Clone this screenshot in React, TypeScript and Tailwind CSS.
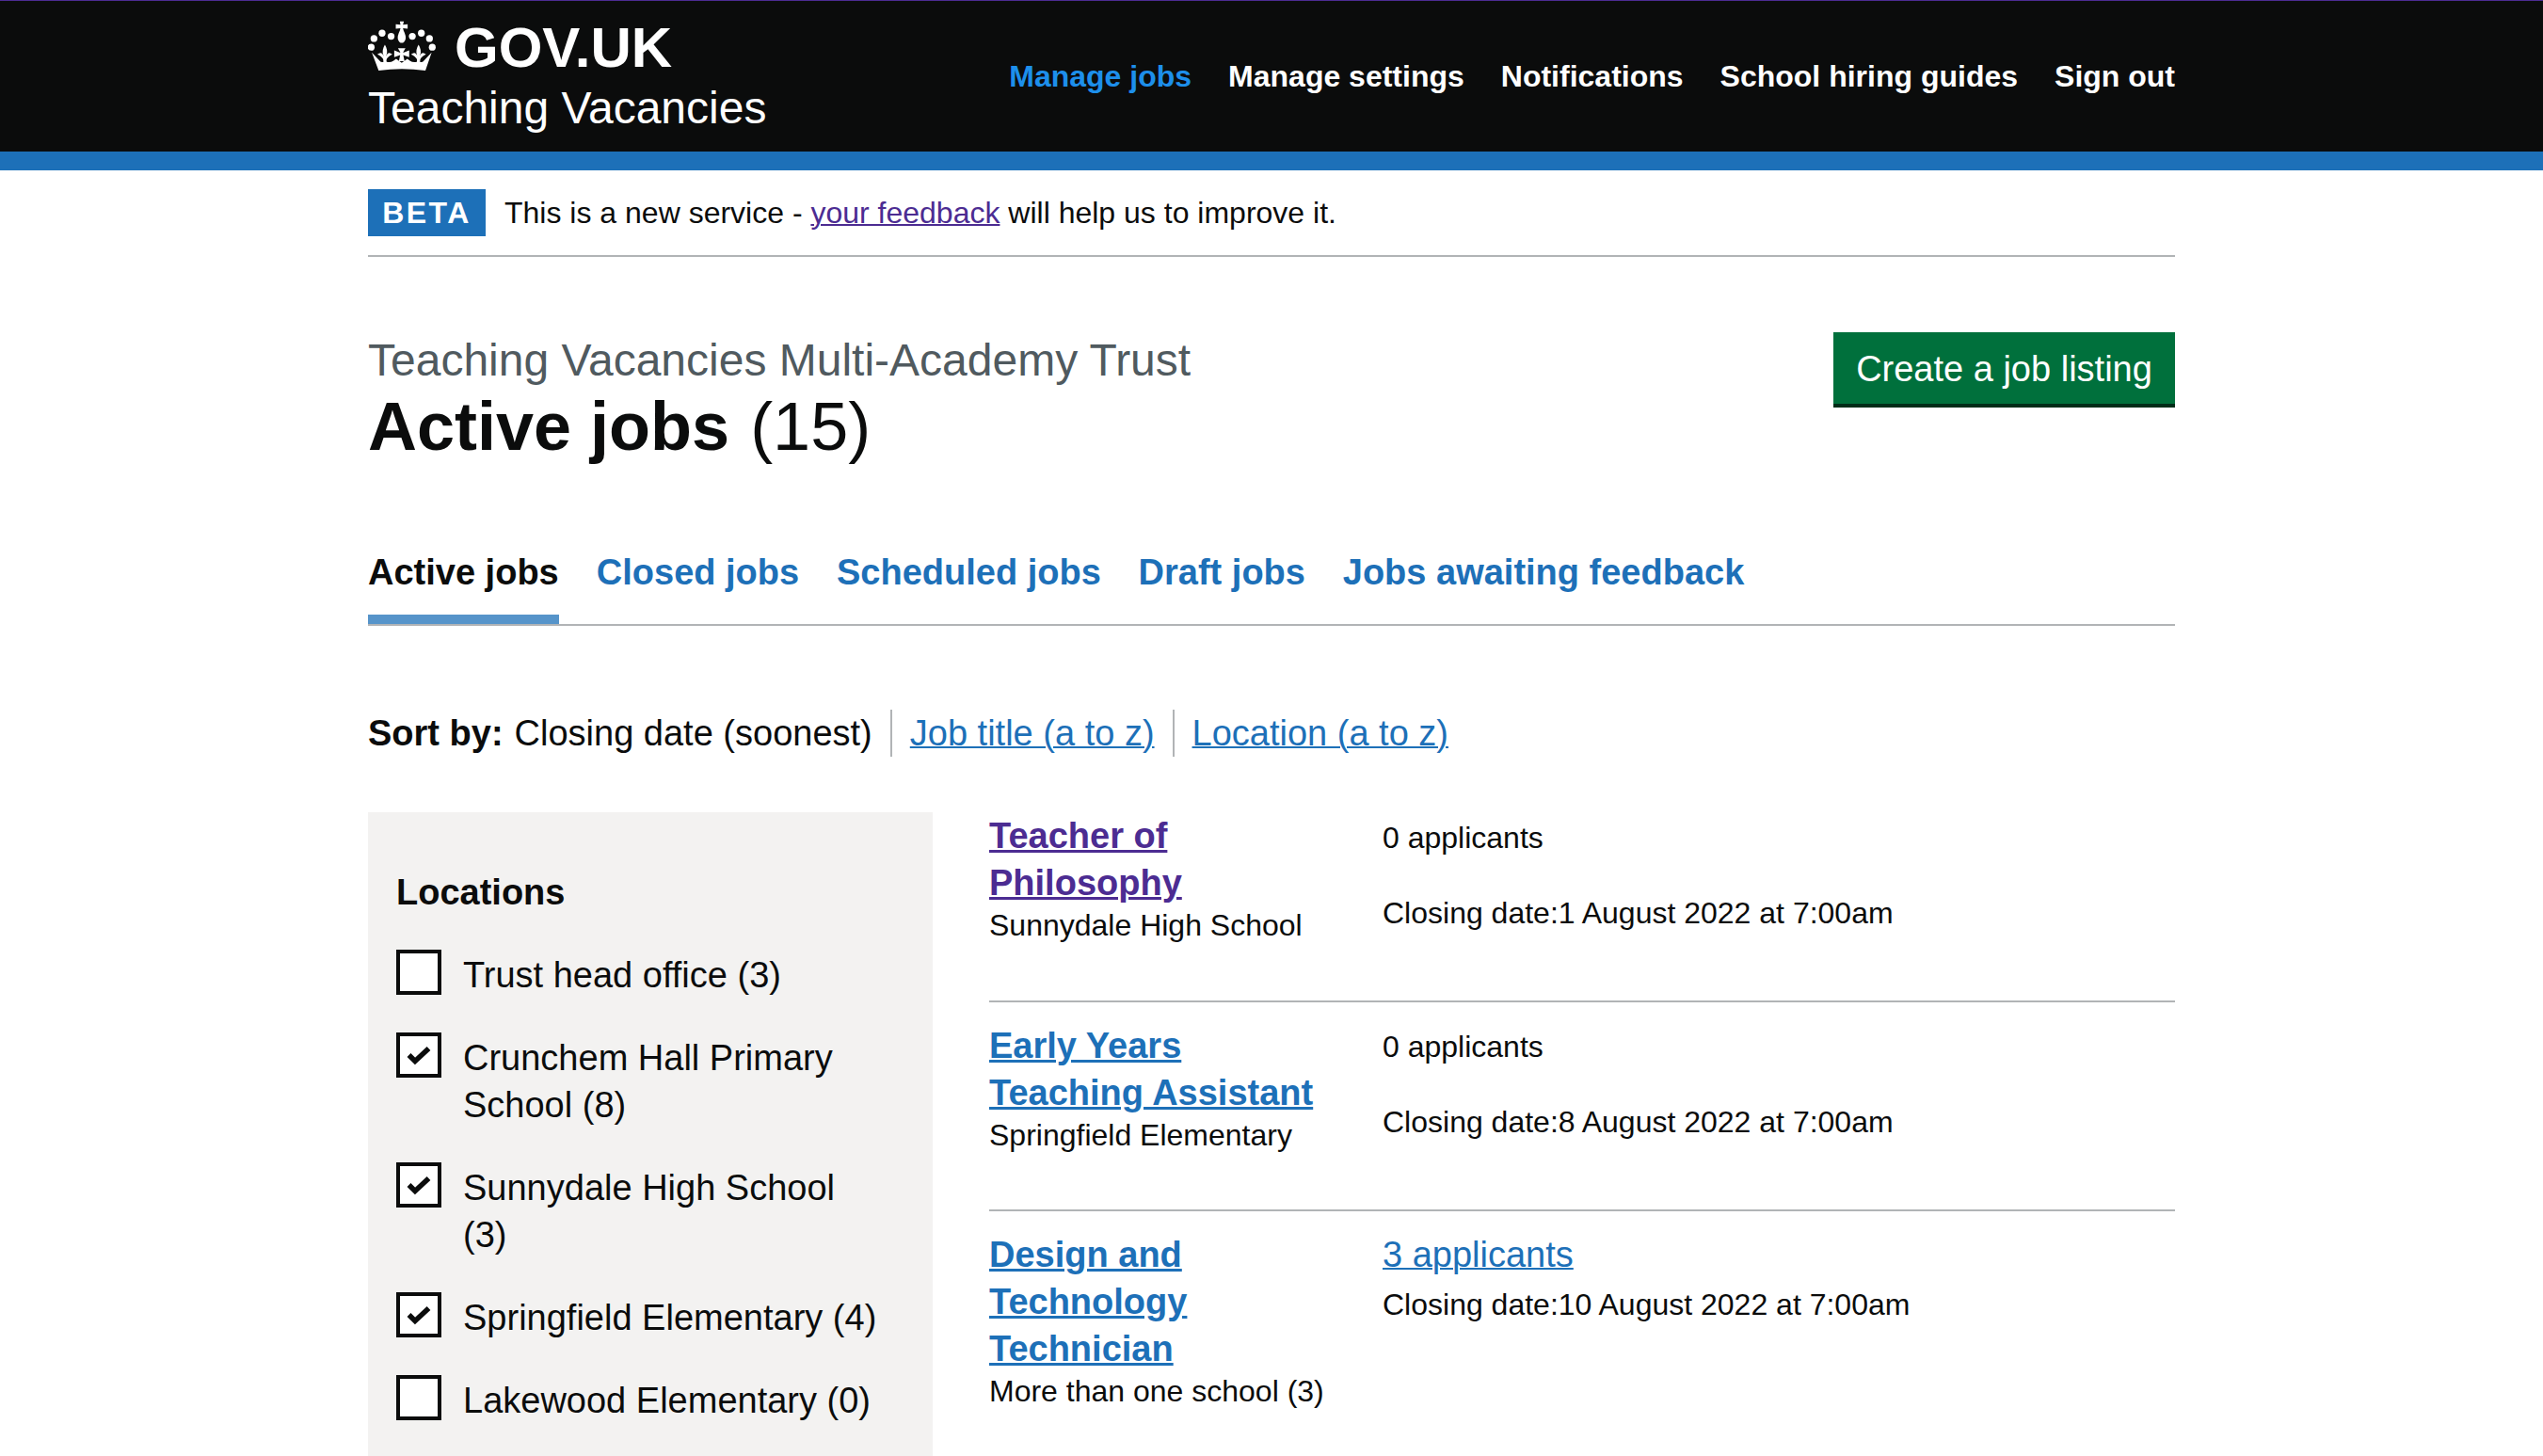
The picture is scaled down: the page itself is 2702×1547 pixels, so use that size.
import React from 'react';

const navItems = ['Manage settings', 'Notifications', 'School hiring guides', 'Sign out'];
const tabs = ['Closed jobs', 'Scheduled jobs', 'Draft jobs', 'Jobs awaiting feedback'];

const locations = [
    { label: 'Trust head office (3)', checked: false },
    { label: 'Crunchem Hall Primary School (8)', checked: true },
    { label: 'Sunnydale High School (3)', checked: true },
    { label: 'Springfield Elementary (4)', checked: true },
    { label: 'Lakewood Elementary (0)', checked: false },
];

const jobs = [
    { title: 'Teacher of Philosophy', school: 'Sunnydale High School', applicants: '0 applicants', date: '1 August 2022 at 7:00am', visited: true },
    { title: 'Early Years Teaching Assistant', school: 'Springfield Elementary', applicants: '0 applicants', date: '8 August 2022 at 7:00am', visited: false },
    { title: 'Design and Technology Technician', school: 'More than one school (3)', applicants: '3 applicants', date: '10 August 2022 at 7:00am', visited: false, link: true },
];

const Fleur = () => (
    <>
        <path d="M72 97 Q83 115 77 130 L77 152 L67 152 L67 130 Q61 115 72 97Z" />
        <path d="M48 128 Q62 116 69 135 L69 147 Q60 132 48 128Z" />
        <path d="M96 128 Q82 116 75 135 L75 147 Q84 132 96 128Z" />
    </>
);

const Crown = () => (
    <svg viewBox="18 20 217 160" className="w-[72px] h-[53px] shrink-0 mb-[6px]" fill="white">
        <path d="M120 22 H133 L130 33 L145 31 V46 L130 44 L132 52 Q141 70 138 80 Q134 91 126 91 Q118 91 114 80 Q111 70 120 52 L122 44 L107 46 V31 L122 33 Z" />
        <circle cx="92" cy="70" r="11" />
        <circle cx="63" cy="60" r="11" />
        <circle cx="37" cy="77" r="11" />
        <circle cx="28" cy="105" r="11" />
        <circle cx="160" cy="70" r="11" />
        <circle cx="189" cy="60" r="11" />
        <circle cx="215" cy="77" r="11" />
        <circle cx="224" cy="105" r="11" />
        <path d="M30 122 L55 148 Q60 155 68 152 L72 146 L78 152 Q90 155 100 148 L108 142 L126 155 L144 142 L152 148 Q162 155 174 152 L180 146 L184 152 Q192 155 197 148 L222 122 L202 180 Q126 170 52 180 Z" />
        <Fleur />
        <g transform="translate(108 0)"><Fleur /></g>
        <path d="M114 108 H138 L131 120 V123 L150 115 V137 L131 130 L135 150 H117 L121 130 L102 137 V115 L121 123 V120 Z" />
    </svg>
);

const Checkbox = ({ checked }: { checked: boolean }) => (
    <span className="shrink-0 w-[48px] h-[48px] border-[4px] border-[#0b0c0c] bg-white flex items-center justify-center">
        {checked && (
            <svg viewBox="0 0 26 21" className="w-[26px] h-[21px]">
                <path d="M2.500 10 L9 16.500 L23.500 3" fill="none" stroke="#0b0c0c" strokeWidth="5.500" />
            </svg>
        )}
    </span>
);

export default function App() {
    return (
        <div className="h-[1547px] overflow-hidden bg-white text-[#0b0c0c] font-['Liberation_Sans',Arial,sans-serif]">
            <header className="bg-[#0b0c0c] border-t border-[#4c2c92] h-[161px]">
                <div className="w-[1920px] mx-auto h-full flex items-start justify-between">
                    <div className="pt-[18px]">
                        <div className="flex items-center gap-[20px] h-[64px]">
                            <Crown />
                            <span className="text-white font-bold text-[60px] leading-[64px]">GOV.UK</span>
                        </div>
                        <div className="text-white text-[48px] leading-[60px] mt-[2px]">Teaching Vacancies</div>
                    </div>
                    <nav className="flex gap-[39px] pt-[60px] text-[32px] leading-[40px] font-bold text-white">
                        <a className="text-[#1d8feb]">Manage jobs</a>
                        {navItems.map(item => <a key={item}>{item}</a>)}
                    </nav>
                </div>
            </header>
            <div className="h-[20px] bg-[#1d70b8]"></div>

            <main className="w-[1920px] mx-auto">
                <div className="h-[92px] border-b-2 border-[#b1b4b6] pt-[20px] flex items-start">
                    <strong className="bg-[#1d70b8] text-white text-[32px] leading-[50px] h-[50px] w-[125px] text-center tracking-[2.5px]">BETA</strong>
                    <p className="ml-[20px] text-[32px] leading-[50px]">
                        This is a new service - <a className="text-[#4c2c92] underline decoration-2">your feedback</a> will help us to improve it.
                    </p>
                </div>

                <div className="flex justify-between items-start pt-[80px]">
                    <div>
                        <div className="text-[48px] leading-[50px] text-[#505a5f] pt-[5px]">Teaching Vacancies Multi-Academy Trust</div>
                        <h1 className="text-[72px] leading-[80px] mt-[5px]"><span className="font-bold">Active jobs</span> <span className="ml-[2px]">(15)</span></h1>
                    </div>
                    <button className="w-[363px] h-[80px] pt-[2px] bg-[#00703c] text-white text-[38px] leading-[70px] border-b-[4px] border-[#002d18] text-center">Create a job listing</button>
                </div>

                <div className="mt-[75px] border-b-2 border-[#b1b4b6] flex gap-[39.8px] h-[97px] text-[38px] font-bold">
                    <div className="w-[203px] h-[95px] border-b-[10px] border-[#5694ca] leading-[80px]">Active jobs</div>
                    {tabs.map(tab => <a key={tab} className="text-[#1d70b8] leading-[80px]">{tab}</a>)}
                </div>

                <div className="mt-[89px] flex items-center text-[38px] leading-[50px] h-[50px]">
                    <span className="font-bold">Sort by:</span>
                    <span className="ml-[12px] pr-[19px] border-r-2 border-[#b1b4b6]">Closing date (soonest)</span>
                    <a className="ml-[19px] pr-[19px] border-r-2 border-[#b1b4b6] text-[#1d70b8] underline decoration-2">Job title (a to z)</a>
                    <a className="ml-[19px] text-[#1d70b8] underline decoration-2">Location (a to z)</a>
                </div>

                <div className="mt-[59px] flex items-start">
                    <aside className="w-[600px] shrink-0 bg-[#f3f2f1] px-[30px] pt-[60px] h-[700px]">
                        <h2 className="text-[38px] leading-[50px] font-bold">Locations</h2>
                        <ul className="mt-[36px] flex flex-col gap-[36px]">
                            {locations.map(loc => (
                                <li key={loc.label} className="flex gap-[23px]">
                                    <Checkbox checked={loc.checked} />
                                    <span className="max-w-[445px] text-[38px] leading-[50px] pt-[2px]">{loc.label}</span>
                                </li>
                            ))}
                        </ul>
                    </aside>
                    <div className="ml-[60px] flex-1">
                        {jobs.map((job, i) => (
                            <div key={job.title} className={`flex ${i === 0 ? 'h-[202px]' : 'h-[222px] pt-[21px]'} ${i < 2 ? 'border-b-2 border-[#b1b4b6]' : ''}`}>
                                <div className="w-[418px] shrink-0 pr-[50px]">
                                    <a className={`block text-[38px] leading-[50px] font-bold underline decoration-[3px] ${job.visited ? 'text-[#4c2c92]' : 'text-[#1d70b8]'}`}>{job.title}</a>
                                    <div className="text-[32px] leading-[40px]">{job.school}</div>
                                </div>
                                <div className="text-[32px] leading-[40px]">
                                    {job.link ? (
                                        <a className="block text-[38px] leading-[50px] text-[#1d70b8] underline decoration-2 mb-[8px]">{job.applicants}</a>
                                    ) : (
                                        <div className={`${i === 0 ? 'mt-[7px]' : 'mt-[6px]'} mb-[40px]`}>{job.applicants}</div>
                                    )}
                                    <div>Closing date:{job.date}</div>
                                </div>
                            </div>
                        ))}
                    </div>
                </div>
            </main>
        </div>
    );
}
